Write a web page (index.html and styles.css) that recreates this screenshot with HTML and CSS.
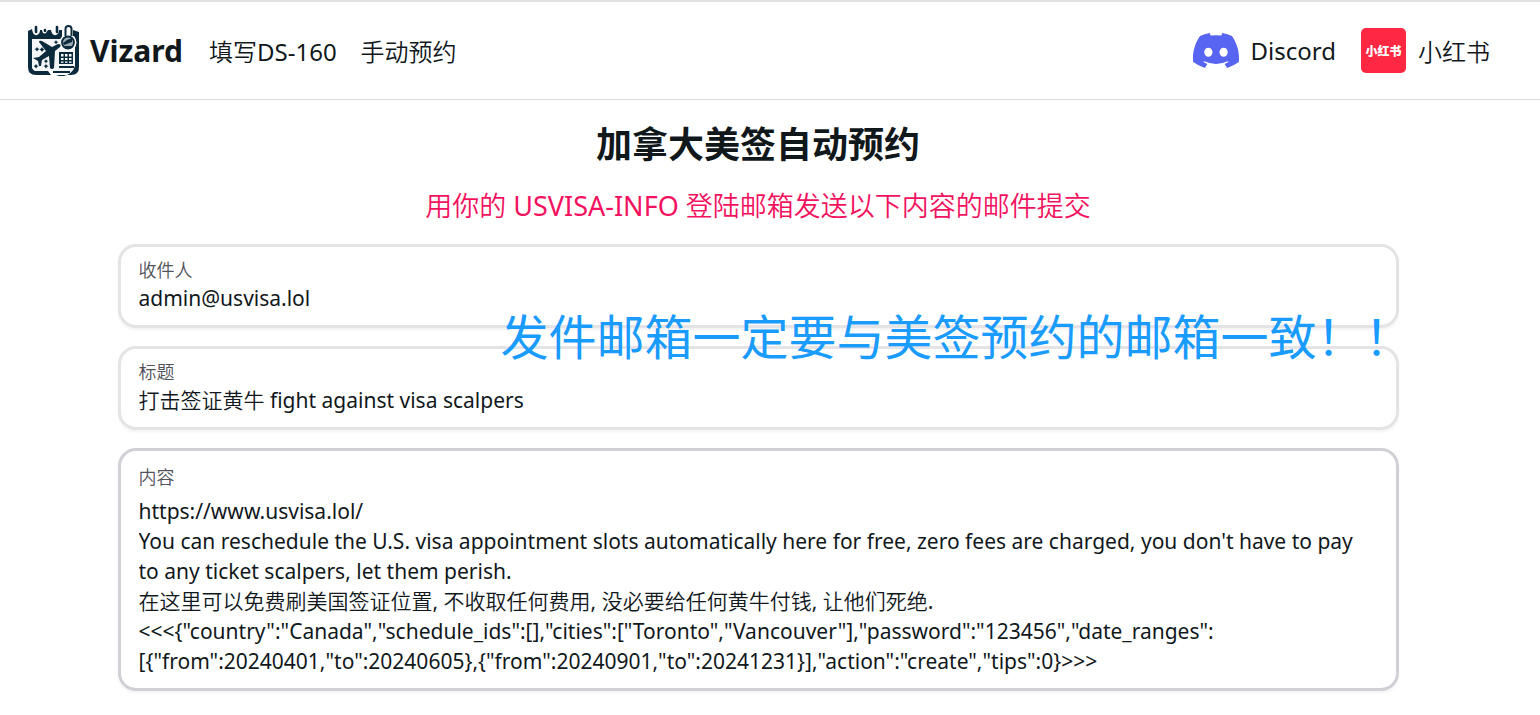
FILE: index.html
```html
<!DOCTYPE html>
<html lang="zh-CN">
<head>
<meta charset="utf-8">
<title>Vizard</title>
<link rel="stylesheet" href="styles.css">
</head>
<body>
<header class="navbar">
  <a class="brand" href="#">
    <svg class="brand-logo" viewBox="0 0 52 52" aria-hidden="true">
      <path d="M0 6L4 4Q5 11 9 10Q12 9 12 5H14Q15 10 18 8L20 5H23Q24 11 28 10Q31 9 31 5H34V15H4V41Q4 46 9 46H20L23 50H8Q0 50 0 42z" fill="#0b2a3c"/>
      <path d="M45 5L51 7V42Q51 50 43 50H39Q47 46 47 39V12H45z" fill="#0b2a3c"/>
      <path d="M4 14H47V39Q46 45 41 46H9Q4 46 4 41z" fill="#f4f6f7"/>
      <path d="M8 2V7M17 5V6M29 2V7" stroke="#0b2a3c" stroke-width="2.600" stroke-linecap="round"/>
      <circle cx="40" cy="17.500" r="8.500" fill="#fff"/>
      <path d="M37.500 11V4Q37.500 1 40.500 1Q43.500 1 43.500 4V11" fill="#fff" stroke="#0b2a3c" stroke-width="2"/>
      <circle cx="40" cy="17.500" r="6" fill="#9dabb4" stroke="#0b2a3c" stroke-width="1.800"/>
      <path d="M35 18L39 15L44 13V17L36 20zM36 21H45L42 23H38z" fill="#0b2a3c"/>
      <path d="M11 17Q11 15 14 16L24 22L30 19Q34 19 32 22L27 26L26 43Q24 45 22 43L21 31L14 35L13 41L11 41L10 36L5 33L11 32L18 26z" fill="#0b2a3c"/>
      <path d="M31 27H45V39H31z" fill="#0b2a3c"/>
      <path d="M33 29h2.500v2.500H33zM37 29h2.500v2.500H37zM41 29h2.500v2.500H41zM33 33h2.500v2H33zM37 33h2.500v2H37zM41 33h2.500v2H41zM33 36.500h2.500v1.200H33zM37 36.500h2.500v1.200H37zM41 36.500h2.500v1.200H41z" fill="#fff"/>
      <path d="M31 42H46M25 47H42" fill="none" stroke="#0b2a3c" stroke-width="1.800"/>
      <path d="M28 50H39L36 51H31z" fill="#0b2a3c"/>
      <path d="M9 22l1 1.500 1.500.5-1.500 1-1 1.500-1-1.500-1.500-1 1.500-.5zM14 22l1 1.500 1.500 1-1.500 1-1 1.500-1-1.500-1.500-1 1.500-1zM28 15l.8 1.500 1.500.5-1.500 1-.8 1.500-.8-1.500-1.500-1 1.500-.5zM8 39l1 1.500 1.500.5-1.500 1-1 1.500-1-1.500-1.500-1 1.500-.5zM18 34l.8 1.500 1.500.5-1.500 1-.8 1.500-.8-1.500-1.500-1 1.500-.5zM18 39l1 1.500 1.500.5-1.500 1-1 1.500-1-1.500-1.500-1 1.500-.5z" fill="#0b2a3c"/>
    </svg>
    <span>Vizard</span>
  </a>
  <nav class="menu">
    <a href="#">填写DS-160</a>
    <a href="#">手动预约</a>
  </nav>
  <nav class="social">
    <a href="#">
      <svg class="discord" viewBox="0 0 127.140 96.360" aria-hidden="true"><path fill="#5865f2" d="M107.700 8.070A105.150 105.150 0 0 0 81.470 0a72.060 72.060 0 0 0-3.360 6.830 97.680 97.680 0 0 0-29.110 0A72.370 72.370 0 0 0 45.640 0a105.890 105.890 0 0 0-26.250 8.090C2.790 32.650-1.710 56.600.54 80.210a105.730 105.730 0 0 0 32.170 16.150 77.700 77.700 0 0 0 6.890-11.110 68.420 68.420 0 0 1-10.850-5.180c.91-.66 1.800-1.340 2.660-2a75.570 75.570 0 0 0 64.320 0c.87.710 1.760 1.390 2.660 2a68.680 68.680 0 0 1-10.870 5.190 77 77 0 0 0 6.890 11.100 105.250 105.250 0 0 0 32.190-16.140c2.640-27.380-4.510-51.110-18.900-72.150zM42.450 65.690C36.180 65.690 31 60 31 53s5-12.740 11.430-12.740S54 46 53.890 53s-5.050 12.690-11.440 12.690zm42.240 0C78.410 65.690 73.250 60 73.250 53s5-12.740 11.440-12.740S96.230 46 96.120 53s-5.040 12.690-11.430 12.690z"/></svg>
      <span>Discord</span>
    </a>
    <a href="#">
      <span class="xhs" aria-hidden="true">小红书</span>
      <span>小红书</span>
    </a>
  </nav>
</header>
<main class="page">
  <h1>加拿大美签自动预约</h1>
  <p class="hint">用你的 USVISA-INFO 登陆邮箱发送以下内容的邮件提交</p>
  <form class="mail">
    <div class="field">
      <label for="to">收件人</label>
      <input id="to" type="text" value="admin@usvisa.lol" readonly>
    </div>
    <div class="field">
      <label for="subject">标题</label>
      <input id="subject" type="text" value="打击签证黄牛 fight against visa scalpers" readonly>
    </div>
    <div class="field field-body">
      <label for="content">内容</label>
      <textarea id="content" rows="6" spellcheck="false" readonly>https://www.usvisa.lol/
You can reschedule the U.S. visa appointment slots automatically here for free, zero fees are charged, you don't have to pay to any ticket scalpers, let them perish.
在这里可以免费刷美国签证位置, 不收取任何费用, 没必要给任何黄牛付钱, 让他们死绝.
&lt;&lt;&lt;{"country":"Canada","schedule_ids":[],"cities":["Toronto","Vancouver"],"password":"123456","date_ranges":
[{"from":20240401,"to":20240605},{"from":20240901,"to":20241231}],"action":"create","tips":0}&gt;&gt;&gt;</textarea>
    </div>
    <strong class="notice">发件邮箱一定要与美签预约的邮箱一致！！</strong>
  </form>
</main>
</body>
</html>
```
FILE: styles.css
```css
* { box-sizing: border-box; }
body {
  margin: 0;
  background: #fff;
  color: #11181c;
  font-family: "Noto Sans", "Noto Sans CJK SC DemiLight", "Noto Sans CJK SC Light", "Noto Sans CJK SC", sans-serif;
  border-top: 2px solid #e0e2e2;
}
a { color: inherit; text-decoration: none; }
.navbar {
  display: flex;
  align-items: center;
  height: 98px;
  padding: 0 50px 0 28px;
  border-bottom: 1px solid #dcdcdc;
  font-size: 24px;
}
.brand {
  display: flex;
  align-items: center;
  gap: 10px;
  font-size: 30px;
  font-weight: 700;
}
.brand-logo { width: 52px; height: 52px; }
.menu { display: flex; gap: 24px; margin-left: 26px; }
.social { display: flex; gap: 25px; margin-left: auto; }
.social a { display: flex; align-items: center; gap: 12px; }
.discord { width: 46px; height: 35px; }
.xhs {
  display: flex;
  align-items: center;
  justify-content: center;
  width: 45px;
  height: 45px;
  border-radius: 5px;
  background: #ff2741;
  color: #fff;
  font: 900 12px "Noto Sans CJK SC", sans-serif;
}
.page { max-width: 1353px; margin: 0 auto; padding: 18px 48px 24px 24px; }
h1 {
  margin: 0;
  font: 700 36px/54px "Noto Sans", "Noto Sans CJK SC", sans-serif;
  text-align: center;
}
.hint {
  margin: 13px 0 17px;
  color: #f31260;
  font-size: 27px;
  line-height: 42px;
  text-align: center;
}
.mail { position: relative; display: flex; flex-direction: column; gap: 18px; }
.field {
  display: flex;
  flex-direction: column;
  padding: 10px 18px 12px;
  border: 3px solid #e4e4e7;
  border-radius: 18px;
  box-shadow: 0 2px 3px rgba(0, 0, 0, .05);
}
.field label { color: #52525b; font-size: 18px; font-weight: 300; line-height: 26px; }
.field input, .field textarea {
  width: 100%;
  padding: 0;
  border: 0;
  outline: 0;
  background: none;
  color: inherit;
  font-family: inherit;
  font-size: 21px;
  line-height: 30px;
}
.field textarea { display: block; resize: none; overflow: hidden; }
.field-body { gap: 6px; padding: 13px 18px 12px; border-color: #d0d0d6; }
.notice {
  position: absolute;
  top: 55px;
  right: -14px;
  color: #1a9bff;
  font: 400 48px/70px "Noto Sans CJK SC", sans-serif;
  white-space: nowrap;
}
```
